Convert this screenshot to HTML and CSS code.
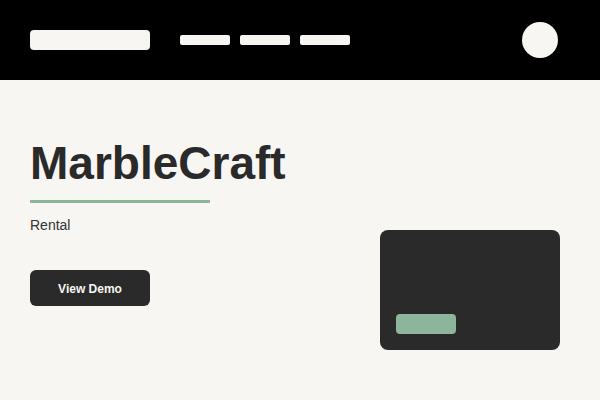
FILE: index.html
```html
<!DOCTYPE html>
<html>
<head>
<meta charset="utf-8">
<link rel="stylesheet" href="styles.css">
</head>
<body>
<header class="topbar">
  <div class="logo"></div>
  <nav class="nav">
    <span class="nav-item"></span>
    <span class="nav-item"></span>
    <span class="nav-item"></span>
  </nav>
  <div class="avatar"></div>
</header>
<main class="hero">
  <section class="intro">
    <h1 class="title">MarbleCraft</h1>
    <div class="rule"></div>
    <p class="subtitle">Rental</p>
    <button class="cta">View Demo</button>
  </section>
  <div class="card">
    <div class="card-pill"></div>
  </div>
</main>
</body>
</html>
```
FILE: styles.css
```css
html, body {
  margin: 0;
  padding: 0;
}
body {
  width: 600px;
  height: 400px;
  background: #f7f6f2;
  font-family: "Liberation Sans", Arial, sans-serif;
  overflow: hidden;
}
.topbar {
  height: 80px;
  background: #000;
  display: flex;
  align-items: center;
  padding: 0 42px 0 30px;
  box-sizing: border-box;
}
.logo {
  width: 120px;
  height: 20px;
  border-radius: 4px;
  background: #f7f6f2;
}
.nav {
  display: flex;
  gap: 10px;
  margin-left: 30px;
}
.nav-item {
  display: block;
  width: 50px;
  height: 10px;
  border-radius: 2px;
  background: #f7f6f2;
}
.avatar {
  margin-left: auto;
  width: 36px;
  height: 36px;
  border-radius: 50%;
  background: #f7f6f2;
}
.hero {
  display: flex;
  justify-content: space-between;
  align-items: flex-start;
  padding: 60px 40px 0 30px;
}
.intro {
  display: flex;
  flex-direction: column;
  align-items: flex-start;
}
.title {
  margin: 0;
  font-size: 46px;
  line-height: 46px;
  font-weight: 700;
  color: #2a2a2a;
}
.rule {
  width: 180px;
  height: 3px;
  background: #8db59b;
  margin-top: 14px;
}
.subtitle {
  margin: 14px 0 0;
  font-size: 14px;
  line-height: 16px;
  color: #333;
}
.cta {
  margin-top: 37px;
  width: 120px;
  height: 36px;
  border: none;
  border-radius: 6px;
  background: #2a2a2a;
  color: #f7f6f2;
  font-family: "Liberation Sans", Arial, sans-serif;
  font-size: 12px;
  font-weight: 700;
  padding: 2px 0 0;
}
.card {
  margin-top: 90px;
  width: 180px;
  height: 120px;
  border-radius: 8px;
  background: #2a2a2a;
  display: flex;
  flex-direction: column;
  justify-content: flex-end;
  padding: 16px;
  box-sizing: border-box;
}
.card-pill {
  width: 60px;
  height: 20px;
  border-radius: 4px;
  background: #8db59b;
}
```
